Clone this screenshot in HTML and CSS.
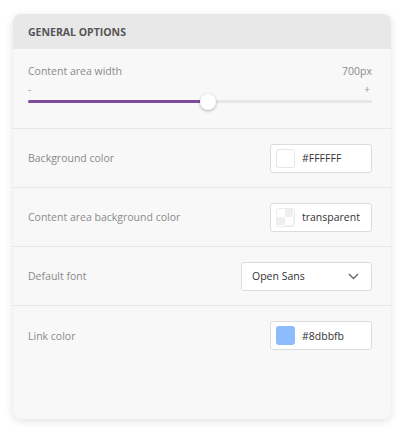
FILE: index.html
```html
<!DOCTYPE html>
<html>
<head>
<meta charset="utf-8">
<link rel="stylesheet" href="styles.css">
</head>
<body>
<div class="card">
  <div class="card-header">GENERAL OPTIONS</div>
  <div class="section slider-section">
    <div class="slider-top">
      <span class="label">Content area width</span>
      <span class="value">700px</span>
    </div>
    <div class="slider-ends">
      <span>-</span>
      <span>+</span>
    </div>
    <div class="track">
      <div class="fill" style="width: 52.3%"></div>
      <div class="thumb" style="left: 52.3%"></div>
    </div>
  </div>
  <div class="section row">
    <span class="label">Background color</span>
    <div class="color-input">
      <span class="swatch white"></span>
      <span class="input-text">#FFFFFF</span>
    </div>
  </div>
  <div class="section row">
    <span class="label">Content area background color</span>
    <div class="color-input">
      <span class="swatch checker"></span>
      <span class="input-text">transparent</span>
    </div>
  </div>
  <div class="section row">
    <span class="label">Default font</span>
    <div class="select">
      <span class="input-text">Open Sans</span>
      <svg class="chevron" width="11" height="7" viewBox="0 0 11 7"><path d="M1 1l4.5 4.5L10 1" fill="none" stroke="#666" stroke-width="1.4"/></svg>
    </div>
  </div>
  <div class="section row last">
    <span class="label">Link color</span>
    <div class="color-input">
      <span class="swatch blue"></span>
      <span class="input-text">#8dbbfb</span>
    </div>
  </div>
</div>
</body>
</html>
```
FILE: styles.css
```css
* { box-sizing: border-box; }
html, body { margin: 0; padding: 0; background: #fff; }
body {
  font-family: "Open Sans", "Noto Sans", sans-serif;
  padding: 14px 15px 18px 13px;
}
.card {
  width: 378px;
  height: 405px;
  background: #f8f8f8;
  border-radius: 8px;
  box-shadow: 0 2px 8px rgba(0, 0, 0, 0.12);
  overflow: hidden;
}
.card-header {
  height: 35px;
  background: #e8e8e8;
  display: flex;
  align-items: center;
  padding-left: 15px;
  font-size: 10.5px;
  font-weight: 700;
  color: #555;
  letter-spacing: 0;
}
.section {
  border-bottom: 1px solid #e6e6e6;
  margin: 0;
}
.section.last { border-bottom: none; }
.label {
  font-size: 10.5px;
  color: #8a8a8a;
}
.slider-section {
  height: 80px;
  padding: 14px 19px 0 15px;
}
.slider-top {
  display: flex;
  justify-content: space-between;
  align-items: center;
  height: 15px;
}
.value {
  font-size: 10.5px;
  color: #8a8a8a;
}
.slider-ends {
  display: flex;
  justify-content: space-between;
  font-size: 10px;
  color: #9a9a9a;
  height: 14px;
  margin-top: 4px;
  line-height: 14px;
  padding-right: 2px;
}
.track {
  position: relative;
  height: 3px;
  background: #e6e6e6;
  border-radius: 2px;
  margin-top: 4px;
}
.fill {
  height: 3px;
  background: #7f4a9c;
  border-radius: 2px;
}
.thumb {
  position: absolute;
  top: 50%;
  width: 16px;
  height: 16px;
  margin-left: -8px;
  margin-top: -8px;
  border-radius: 50%;
  background: #fff;
  box-shadow: 0 1px 3px rgba(0, 0, 0, 0.3);
}
.row {
  height: 59px;
  display: flex;
  align-items: center;
  justify-content: space-between;
  padding: 0 19px 0 15px;
}
.color-input {
  width: 102px;
  height: 29px;
  background: #fff;
  border: 1px solid #dcdcdc;
  border-radius: 3px;
  display: flex;
  align-items: center;
  padding-left: 5px;
  gap: 7px;
}
.swatch {
  width: 19px;
  height: 19px;
  border-radius: 3px;
  display: block;
}
.swatch.white {
  background: #fff;
  border: 1px solid #e6e6e6;
}
.swatch.checker {
  border: 1px solid #ececec;
  background-color: #fff;
  background-image:
    linear-gradient(45deg, #efefef 25%, transparent 25%, transparent 75%, #efefef 75%),
    linear-gradient(45deg, #efefef 25%, transparent 25%, transparent 75%, #efefef 75%);
  background-size: 16px 16px;
  background-position: 0 0, 8px 8px;
}
.swatch.blue {
  background: #8dbbfb;
}
.input-text {
  font-size: 10.5px;
  color: #333;
}
.select {
  width: 131px;
  height: 29px;
  background: #fff;
  border: 1px solid #dcdcdc;
  border-radius: 3px;
  display: flex;
  align-items: center;
  justify-content: space-between;
  padding: 0 12px 0 10px;
}
.chevron { display: block; }
```
